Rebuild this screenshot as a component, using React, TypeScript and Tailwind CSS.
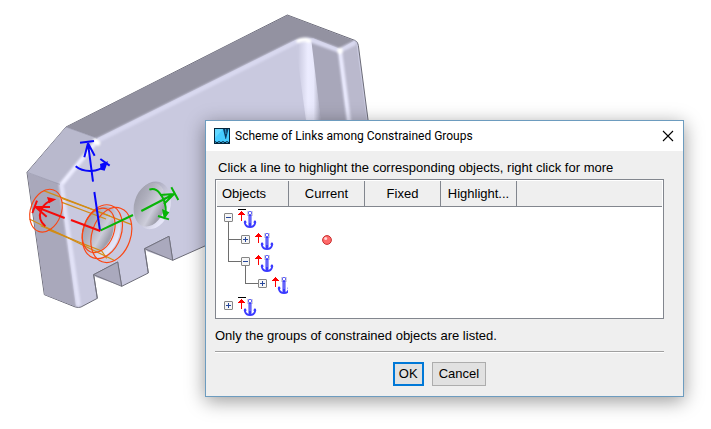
import { clsx } from 'clsx'

type Guide = 'none' | 'line' | 'tee' | 'elbow'

interface TreeRow {
  id: string
  guides: Guide[]
  expanded: boolean
  fixed?: boolean
  current?: boolean
}

const rows: TreeRow[] = [
  { id: 'root', guides: [], expanded: true, fixed: true },
  { id: 'first', guides: ['tee'], expanded: false, current: true },
  { id: 'second', guides: ['elbow'], expanded: true },
  { id: 'nested', guides: ['none', 'elbow'], expanded: false },
  { id: 'other', guides: [], expanded: false, fixed: true },
]

const columns = ['Current', 'Fixed', 'Highlight...']

function GuideSlot({ kind }: { kind: Guide }) {
  return (
    <svg className="h-[22px] w-[17px] shrink-0" viewBox="0 0 17 22" shapeRendering="crispEdges" fill="#6e6e6e">
      {kind !== 'none' && <rect x="4" y="0" width="1" height={kind === 'elbow' ? 11 : 22} />}
      {(kind === 'tee' || kind === 'elbow') && <rect x="4" y="10" width="13" height="1" />}
    </svg>
  )
}

function Expander({ expanded }: { expanded: boolean }) {
  return (
    <button type="button" aria-expanded={expanded} aria-label={expanded ? 'Collapse' : 'Expand'} className="block shrink-0">
      <svg className="h-[22px] w-[9px]" viewBox="0 0 9 22">
        {expanded && <rect x="4" y="14" width="1" height="8" fill="#6e6e6e" />}
        <rect x="0.5" y="6.5" width="8" height="8" rx="0.5" fill="#f6f6f6" stroke="#858585" />
        <rect x="2" y="10" width="5" height="1" fill="#26479c" />
        {!expanded && <rect x="4" y="8" width="1" height="5" fill="#26479c" />}
      </svg>
    </button>
  )
}

function AnchorIcon({ fixed }: { fixed?: boolean }) {
  return (
    <svg className="h-[22px] w-[19px] shrink-0" viewBox="0 0 19 22">
      {fixed && <rect x="0" y="2" width="8" height="1" fill="#000" />}
      <g fill="#f00" shapeRendering="crispEdges">
        <rect x="3" y="4" width="1" height="10" />
        <rect x="2" y="5" width="3" height="1" />
        <rect x="1" y="6" width="5" height="1" />
        <rect x="0" y="7" width="7" height="1" />
      </g>
      <rect x="9" y="4" width="6" height="5" fill="#d6d6de" />
      <rect x="10.500" y="4.500" width="3" height="3" rx="1" fill="#fff" stroke="#3a3aff" />
      <rect x="10.500" y="8" width="3" height="12" fill="#3a3aff" />
      <rect x="11.500" y="9" width="1" height="7" fill="#8f8ff0" />
      <path
        d="M7 14V16.500Q8 20 12 20T17 16.500V14"
        fill="none"
        stroke="#3a3aff"
        strokeWidth="1.900"
      />
      <path d="M5.500 15.500L7 13L9 15.500ZM18.500 15.500L17 13L15 15.500Z" fill="#3a3aff" />
    </svg>
  )
}

function StatusBall() {
  return (
    <svg className="h-[10px] w-[10px]" viewBox="0 0 10 10" role="img" aria-label="Current group">
      <circle cx="5" cy="5" r="4.400" fill="#ff6a6a" stroke="#c83030" strokeWidth="1" />
      <circle cx="3.700" cy="3.600" r="1.500" fill="#ffd6d6" />
    </svg>
  )
}

function AppIcon() {
  return (
    <svg className="h-4 w-4 shrink-0" viewBox="0 0 16 16">
      <rect width="16" height="16" fill="#06263c" />
      <rect x="1" y="1" width="14" height="12" fill="#46cbff" />
      <path d="M1 1H9L1 10Z" fill="#64d8ff" />
      <path d="M9 1L11.500 11H12L14.500 1Z" fill="#0a3c64" />
      <path d="M11.500 1L12 6" stroke="#2f95c8" strokeWidth="1" />
      <path d="M1 14.500L3 13.200L5 14.500L7 13.200L9 14.500L11 13.200L13 14.500L15 13.200" fill="none" stroke="#39b8ef" strokeWidth="1" />
    </svg>
  )
}

function PartDrawing() {
  return (
    <svg className="absolute top-0 left-0 h-[320px] w-[390px]" viewBox="0 0 1170 960" aria-hidden="true">
      <defs>
        <linearGradient id="fold" x1="0" x2="1" y1="0" y2="0">
          <stop offset="0.100" stopColor="#cacae0" />
          <stop offset="0.450" stopColor="#ececff" />
          <stop offset="0.650" stopColor="#e8e8fc" />
          <stop offset="0.900" stopColor="#a9a9bc" />
        </linearGradient>
        <linearGradient id="bore" x1="0" x2="1" y1="0" y2="0.300">
          <stop offset="0" stopColor="#9b9ba9" />
          <stop offset="0.400" stopColor="#b0b0be" />
          <stop offset="0.750" stopColor="#cdcdda" />
          <stop offset="1" stopColor="#a0a0ad" />
        </linearGradient>
        <linearGradient id="rim" x1="0" x2="1" y1="0" y2="0.500">
          <stop offset="0" stopColor="#8e8e9e" />
          <stop offset="0.450" stopColor="#b4b4c7" />
          <stop offset="1" stopColor="#e6e6f8" />
        </linearGradient>
        <filter id="soften" x="-10%" y="-10%" width="120%" height="120%">
          <feGaussianBlur stdDeviation="2.500" />
        </filter>
      </defs>

      {/* body */}
      <path
        d="M862 45L1064 121Q1074 125 1075 136L1112 420L700 700L518 781L507 709L434 746L445 819L365 859L353 786L281 824L292 895L243 921Q236 924 226 921L133 884L81 517L198 381Z"
        fill="#c9c9df"
        stroke="#6c6c78"
        strokeWidth="3"
      />
      <path d="M198 381L862 46L1062 122L1022 148L940 115L888 119L292 415Z" fill="#9392a1" />
      <path d="M82 517L198 381L292 415L180 553Z" fill="#b9b9cd" />
      <path d="M82 518L180 553L228 920L134 884Z" fill="#a9a8bb" />

      {/* recess on the right */}
      <path d="M930 120L1016 154L1050 420H970Z" fill="#a8a7ba" />
      <path d="M886 126L934 122L970 420H926Z" fill="url(#fold)" />
      <path d="M1022 152L1068 126L1108 420H1056Z" fill="#bab9cd" />

      {/* rounded edges */}
      <g fill="none" strokeLinejoin="round" strokeLinecap="round" filter="url(#soften)">
        <path d="M292 422L888 126Q912 114 936 122L1018 152L1062 130" stroke="#d9d9f0" strokeWidth="14" />
        <path d="M895 123Q912 116 928 123" stroke="#fff" strokeWidth="12" />
        <path d="M1020 154L1054 420" stroke="#e8e8fc" strokeWidth="13" />
        <path d="M1020 151v3" stroke="#fff" strokeWidth="16" />
        <path d="M288 426L184 553" stroke="#ededff" strokeWidth="13" />
        <path d="M184 556L235 912" stroke="#e2e2f7" strokeWidth="14" />
        <path d="M286 422L294 430" stroke="#fff" strokeWidth="14" />
      </g>
      <path d="M82 517L180 553M198 381L292 415" stroke="#8d8c9e" strokeWidth="1.500" />

      {/* notches */}
      <g fill="#aaa9bd">
        <path d="M281 824L353 786L365 859L288 831Z" />
        <path d="M434 746L507 709L518 781L442 754Z" />
      </g>
      <path
        d="M292 895L281 824L365 859L353 786L281 824M445 819L434 746L518 781L507 709L434 746"
        fill="none"
        stroke="#6c6c78"
        strokeWidth="2.500"
      />

      {/* bores */}
      <ellipse cx="458" cy="616" rx="53" ry="73" fill="url(#rim)" transform="rotate(17 458 616)" />
      <ellipse cx="449" cy="614" rx="46" ry="67" fill="url(#bore)" transform="rotate(17 449 614)" />
      <ellipse cx="305" cy="696" rx="53" ry="79" fill="url(#rim)" transform="rotate(17 305 696)" />
      <ellipse cx="294" cy="690" rx="45" ry="66" fill="url(#bore)" transform="rotate(17 294 690)" />

      {/* construction lines of the cylinder */}
      <g fill="none" stroke="#d28c14" strokeWidth="3.500">
        <path d="M131 572L395 674" />
        <path d="M186 595L330 648M186 607L318 657" />
        <path d="M88 657L342 781" />
        <path d="M122 677L265 738M145 690L305 753L320 775" />
      </g>
      <g fill="none" stroke="#fa4614" strokeWidth="3.500">
        <ellipse cx="138" cy="632" rx="46" ry="66" transform="rotate(20 138 632)" />
        <ellipse cx="296" cy="691" rx="46" ry="69" transform="rotate(20 296 691)" />
        <ellipse cx="307" cy="695" rx="57" ry="83" transform="rotate(19 307 695)" />
        <ellipse cx="334" cy="705" rx="58" ry="85" transform="rotate(19 334 705)" />
      </g>

      {/* blue axis */}
      <g fill="none" stroke="#0808fa" strokeWidth="6">
        <path d="M300 692L283 576M279 545L264 430M240 428L282 423M264 430L253 472M264 430L284 467" />
        <path d="M227 499Q245 514 273 513Q300 512 315 497M301 477L329 497" />
      </g>
      <path d="M324 484L300 492L302 509L314 512Z" fill="#0808fa" />

      {/* green axis */}
      <g fill="none" stroke="#08b408" strokeWidth="6">
        <path d="M302 691L399 645M424 633L522 582M514 562L535 600M522 582L480 585M522 582L492 612" />
        <path d="M448 569Q466 562 480 581Q499 604 497 637M474 648L507 658" />
      </g>
      <path d="M492 659L486 627L508 637Z" fill="#08b408" />

      {/* red axis */}
      <g fill="none" stroke="#f50a0a" strokeWidth="6">
        <path d="M301 693L213 660M194 654L106 620M111 602L97 639M106 620L150 621M106 620L140 650" />
        <path d="M136 679Q112 658 123 632Q130 613 148 604" />
      </g>
      <path d="M169 598L141 591L147 610Z" fill="#f50a0a" />
    </svg>
  )
}

function LinksTable() {
  return (
    <div className="border border-[#82868e] bg-white p-px">
      <table className="w-full table-fixed border-separate border-spacing-0 text-left">
        <thead>
          <tr className="h-[26px] bg-[#efefef]">
            <th className="w-[72px] border-r border-b border-[#82868e] p-0 pl-[5px] font-normal">Objects</th>
            {columns.map((name) => (
              <th key={name} className="w-[76px] border-r border-b border-[#82868e] p-0 text-center font-normal">
                {name}
              </th>
            ))}
            <td className="border-b border-[#82868e] p-0" />
          </tr>
        </thead>
        <tbody>
          {rows.map((row) => (
            <tr key={row.id} className="h-[22px]">
              <td className="p-0">
                <div className="mr-px flex overflow-hidden pl-[7px]">
                  {row.guides.map((kind, i) => (
                    <GuideSlot key={i} kind={kind} />
                  ))}
                  <Expander expanded={row.expanded} />
                  <div className="ml-[5px] flex">
                    <AnchorIcon fixed={row.fixed} />
                  </div>
                </div>
              </td>
              <td className="p-0">
                {row.current && (
                  <div className="flex justify-center pr-px pb-px">
                    <StatusBall />
                  </div>
                )}
              </td>
              <td className="p-0" />
              <td className="p-0" />
              <td className="p-0" />
            </tr>
          ))}
        </tbody>
      </table>
    </div>
  )
}

function DialogButton({ label, primary }: { label: string; primary?: boolean }) {
  return (
    <button
      type="button"
      className={clsx(
        'h-6 bg-[#e1e1e1]',
        primary ? 'border-2 border-[#0078d7] px-1' : 'border border-[#adadad] px-[6px]'
      )}
    >
      {label}
    </button>
  )
}

export default function App() {
  return (
    <main className="relative flow-root min-h-screen bg-white font-['Liberation_Sans',Arial,sans-serif] text-[13px] leading-4 text-black">
      <PartDrawing />
      <section
        role="dialog"
        aria-labelledby="dialog-title"
        className="relative mt-[120px] mr-[27px] ml-[205px] border border-[#6d9cbf] bg-[#efefef] shadow-[0_4px_18px_rgba(0,0,0,0.4)]"
      >
        <header className="flex h-[30px] items-center bg-white pr-[9px] pl-2">
          <AppIcon />
          <h1 id="dialog-title" className="ml-[5px] font-['Roboto','Open_Sans',sans-serif] text-[12px]">
            Scheme of Links among Constrained Groups
          </h1>
          <button type="button" aria-label="Close" className="ml-auto">
            <svg className="h-3 w-3" viewBox="0 0 12 12" stroke="#000" strokeWidth="1.100">
              <path d="M1 1L11 11M11 1L1 11" />
            </svg>
          </button>
        </header>

        <div className="pt-[9px] pr-[19px] pb-[10px] pl-[9px]">
          <p className="mb-[3px] pl-[3px]">
            Click a line to highlight the corresponding objects, right click for more
          </p>
          <LinksTable />
          <p className="mt-[9px]">Only the groups of constrained objects are listed.</p>
          <hr className="mt-[7px] h-[2px] border-t border-b border-t-[#a0a0a0] border-b-white" />
          <div className="mt-[9px] flex justify-center gap-2">
            <DialogButton label="OK" primary />
            <DialogButton label="Cancel" />
          </div>
        </div>
      </section>
    </main>
  )
}
